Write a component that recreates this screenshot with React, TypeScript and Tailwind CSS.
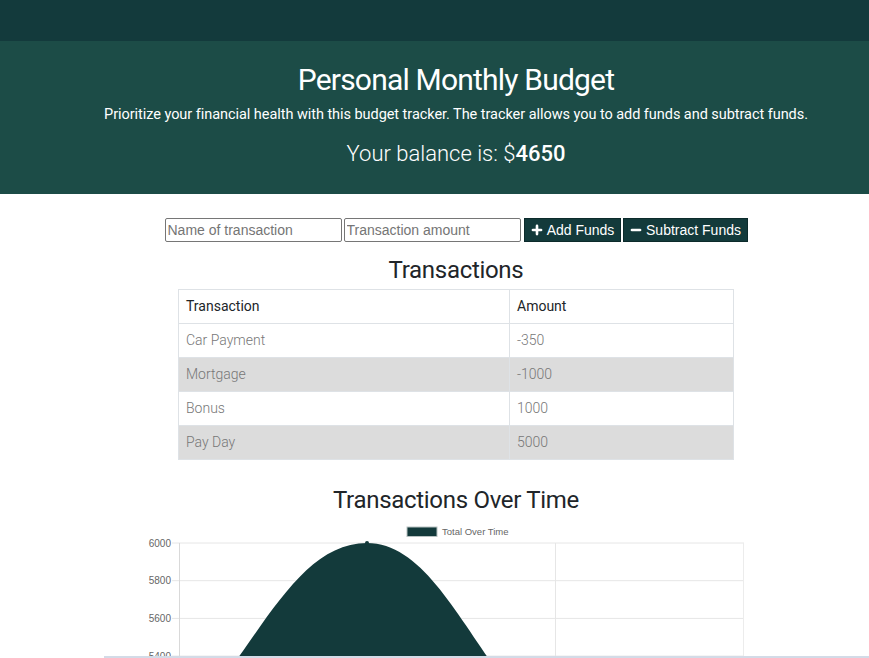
import { Plus, Minus } from 'lucide-react';

const rows = [
  { name: 'Car Payment', amount: '-350' },
  { name: 'Mortgage', amount: '-1000' },
  { name: 'Bonus', amount: '1000' },
  { name: 'Pay Day', amount: '5000' },
];

const ticks = [
  { label: '6000', y: 23 },
  { label: '5800', y: 60.7 },
  { label: '5600', y: 98.4 },
  { label: '5400', y: 136.1 },
];

function Chart() {
  // page-aligned coordinates: x as on page, y = page y - 520
  return (
    <svg width="912" height="150" viewBox="0 0 912 150" className="block">
      <rect x="407" y="7" width="30" height="9.5" fill="#133a3b" stroke="#b8c2c2" strokeWidth="1" />
      <text x="442" y="14.5" fontSize="9.5" fill="#666" fontFamily="'Liberation Sans', Arial, sans-serif">
        Total Over Time
      </text>
      {ticks.map((t) => (
        <g key={t.label}>
          <line x1="172" x2="744" y1={t.y} y2={t.y} stroke="#e6e6e6" strokeWidth="1" />
          <text x="171" y={t.y + 3.5} fontSize="10" fill="#666" textAnchor="end" fontFamily="'Liberation Sans', Arial, sans-serif">
            {t.label}
          </text>
        </g>
      ))}
      <line x1="179.5" x2="179.5" y1="23" y2="150" stroke="#d9d9d9" />
      <line x1="555.5" x2="555.5" y1="23" y2="150" stroke="#e6e6e6" />
      <line x1="743.5" x2="743.5" y1="23" y2="150" stroke="#ececec" />
      <path
        d="M179,211 C254.2,135.8 291.8,23 367,23 C442.2,23 479.6,160 555,211 C630,262 700,270 744,277.5 L744,300 L179,300 Z"
        fill="#133a3b"
      />
      <circle cx="367" cy="23" r="2" fill="#133a3b" />
    </svg>
  );
}

export default function App() {
  return (
    <div className="w-full overflow-hidden bg-white font-['Roboto',sans-serif]">
      <div className="w-[912px]">
        <div className="h-[41px] bg-[#133a3c]" />
        <header className="bg-[#1c4c47] pt-[20px] pb-[25px] text-center text-white">
          <h1 className="text-[30px] leading-[38px] tracking-[-0.8px]">Personal Monthly Budget</h1>
          <p className="mt-[5px] text-[14.5px] leading-[22px] tracking-[-0.05px]">
            Prioritize your financial health with this budget tracker. The tracker allows you to add funds and subtract funds.
          </p>
          <p className="mt-[13px] text-[22px] leading-[30px] font-light">
            Your balance is: $<span className="font-medium">4650</span>
          </p>
        </header>

        <div className="mt-[24px] flex justify-center gap-[2px] font-['Liberation_Sans',Arial,sans-serif] text-[14px]">
          <input
            placeholder="Name of transaction"
            className="h-[24px] w-[177px] rounded-[2px] border border-[#767676] px-[2px] placeholder:text-[#757575]"
          />
          <input
            placeholder="Transaction amount"
            className="h-[24px] w-[177px] rounded-[2px] border border-[#767676] px-[2px] placeholder:text-[#757575]"
          />
          <button className="ml-[1px] flex h-[24px] w-[97px] items-center justify-center gap-[3px] border border-[#0c2a2b] bg-[#133a3b] text-white">
            <Plus size={14} strokeWidth={4.5} />
            Add Funds
          </button>
          <button className="flex h-[24px] w-[125px] items-center justify-center gap-[3px] border border-[#0c2a2b] bg-[#133a3b] text-white">
            <Minus size={14} strokeWidth={4.5} />
            Subtract Funds
          </button>
        </div>

        <h2 className="mt-[13px] text-center text-[24px] leading-[30px] tracking-[-0.3px] text-[#212529]">Transactions</h2>
        <table className="mx-auto mt-[4px] w-[556px] border-collapse border border-[#dee2e6] text-[14px]">
          <thead>
            <tr className="h-[34px]">
              <th className="w-[331px] border border-[#dee2e6] px-[7px] text-left font-normal text-[#212529]">Transaction</th>
              <th className="border border-[#dee2e6] px-[7px] text-left font-normal text-[#212529]">Amount</th>
            </tr>
          </thead>
          <tbody>
            {rows.map((r, i) => (
              <tr key={r.name} className={i % 2 === 1 ? 'h-[34px] bg-[#dcdcdc]' : 'h-[34px] bg-white'}>
                <td className="border border-[#dee2e6] px-[7px] font-light text-[#777]">{r.name}</td>
                <td className="border border-[#dee2e6] px-[7px] font-light text-[#777]">{r.amount}</td>
              </tr>
            ))}
          </tbody>
        </table>

        <h2 className="mt-[25px] text-center text-[24px] leading-[30px] tracking-[-0.3px] text-[#212529]">
          Transactions Over Time
        </h2>
        <div className="mt-[5px]">
          <Chart />
        </div>
      </div>
      <div className="fixed bottom-0 left-[104px] right-0 h-[2px] bg-[#d3dbe7]" />
    </div>
  );
}
